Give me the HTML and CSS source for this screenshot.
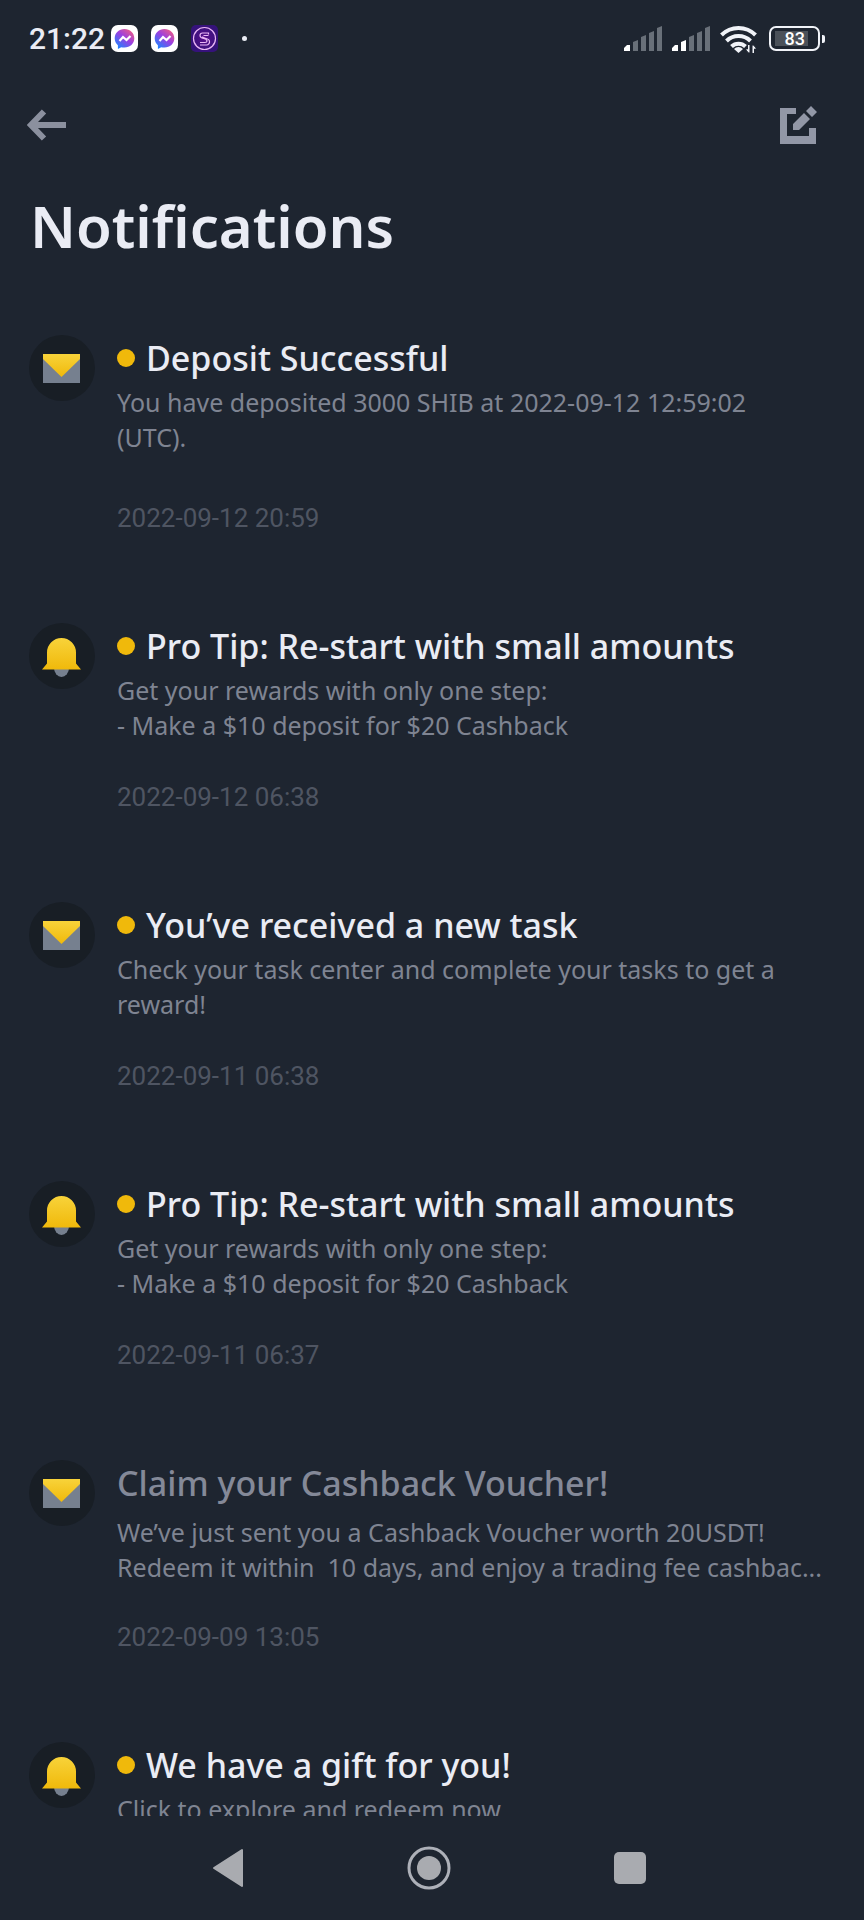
FILE: index.html
```html
<!DOCTYPE html>
<html lang="en">
<head>
    <meta charset="UTF-8">
    <meta name="viewport" content="width=device-width, initial-scale=1.0">
    <title>Notifications</title>
    <link rel="stylesheet" href="styles.css">
</head>
<body>
    <!-- Shared icons -->
    <svg class="sprite" aria-hidden="true">
        <defs>
            <linearGradient id="gold" x1="0" y1="0" x2="0" y2="1">
                <stop offset="0" stop-color="#f8d33a"/>
                <stop offset="1" stop-color="#f0b90b"/>
            </linearGradient>
            <linearGradient id="chat" x1="1" y1="0" x2="0.2" y2="1">
                <stop offset="0" stop-color="#ff6170"/>
                <stop offset="0.5" stop-color="#9b3fe0"/>
                <stop offset="1" stop-color="#1a86ff"/>
            </linearGradient>
            <radialGradient id="purple">
                <stop offset="0" stop-color="#5a0f8c"/>
                <stop offset="1" stop-color="#35127a"/>
            </radialGradient>
        </defs>
        <symbol id="icon-mail" viewBox="0 0 66 66">
            <path fill="#76808f" d="M14 19h37v29H14z"/>
            <path fill="url(#gold)" d="M14 19h37v5L32.5 42 14 24z"/>
        </symbol>
        <symbol id="icon-bell" viewBox="0 0 66 66">
            <path fill="#76808f" d="M25 45h15a7.5 9 0 0 1-15 0z"/>
            <path fill="url(#gold)" d="M18 29.500a14.500 14.500 0 0 1 29 0v11l5 6H13l5-6z"/>
        </symbol>
        <symbol id="icon-messenger" viewBox="0 0 27 27">
            <rect width="27" height="27" rx="7" fill="#fff"/>
            <path fill="url(#chat)" d="M13.5 4C8 4 3.700 8 3.700 13.300c0 2.900 1.200 5.300 3.200 7V24l3.300-1.800c1 .3 2.100.4 3.300.4 5.500 0 9.800-4 9.800-9.300S19 4 13.500 4z"/>
            <path fill="none" stroke="#fff" stroke-width="2.200" d="M8.500 16l3.500-4 3.500 3 4-4"/>
        </symbol>
    </svg>

    <!-- Status bar -->
    <div class="status-bar">
        <div class="status-left">
            <span class="clock">21:22</span>
            <svg class="app-icon" aria-hidden="true"><use href="#icon-messenger"/></svg>
            <svg class="app-icon" aria-hidden="true"><use href="#icon-messenger"/></svg>
            <svg class="app-icon" viewBox="0 0 27 27" aria-hidden="true">
                <rect width="27" height="27" rx="5" fill="url(#purple)"/>
                <circle cx="13.5" cy="13.5" r="11" fill="none" stroke="#e9b6f5" stroke-width="1.200"/>
                <path fill="none" stroke="#e9b6f5" stroke-width="1.200" d="M17.500 9.500v-1.500h-6a2.500 2.500 0 0 0-2.500 2.500c0 4 7 2 7 5.500 0 1-1 1.500-2 1.500H9M17.500 10.500h-5M9 20h6.500a3 3 0 0 0 3-3.500c0-4-7-2.500-7-5"/>
            </svg>
            <span class="more-dot"></span>
        </div>
        <div class="status-right">
            <svg class="signal" viewBox="0 0 39 25" aria-hidden="true">
                <path fill="#fff" d="M0 25v-3l3-3h3v6z"/>
                <path fill="#697079" d="M9 25v-9l5-2v11zM17 25V11l5-2v16zM25 25V7l5-2v20zM33 25V2l5-2v25z"/>
            </svg>
            <svg class="signal" viewBox="0 0 39 25" aria-hidden="true">
                <path fill="#fff" d="M0 25v-3l3-3h3v6zM9 25v-9l5-2v11z"/>
                <path fill="#697079" d="M17 25V11l5-2v16zM25 25V7l5-2v20zM33 25V2l5-2v25z"/>
            </svg>
            <svg class="wifi" viewBox="0 0 37 28" aria-hidden="true">
                <g fill="none" stroke="#f1f3f8" stroke-width="4">
                    <path d="M1.500 10a24 24 0 0 1 34 0"/>
                    <path d="M6.500 16a17 17 0 0 1 24 0"/>
                    <path d="M11.500 21.500a10 10 0 0 1 14 0"/>
                </g>
                <path fill="#f1f3f8" d="M14 24a6 6 0 0 1 9 0l-4.500 4z"/>
                <path fill="#f1f3f8" stroke="#1e2530" d="M30 19.500v8.500h-1.500l-3.500-4h2.500v-4.500zM32 28.500v-8.500h1.500l3.500 4h-2.500v4.500z"/>
            </svg>
            <div class="battery"><span class="battery-level">83</span></div>
        </div>
    </div>

    <header class="header">
        <button class="icon-btn" type="button" aria-label="Back">
            <svg width="40" height="32" viewBox="0 0 40 32">
                <path fill="none" stroke="#8b909e" stroke-width="6" d="M39 16H5M17 2.500L4 16l13 13.500"/>
            </svg>
        </button>
        <button class="icon-btn" type="button" aria-label="Mark all as read">
            <svg width="38" height="38" viewBox="0 0 38 38">
                <path fill="#9297a6" d="M0 2h16v6H7v22h22v-8h7v16H0zM13 18L24 7l6 6-11 11h-6zM26 5l5-5 6 6-5 5z"/>
            </svg>
        </button>
    </header>

    <h1 class="page-title">Notifications</h1>

    <main class="list">
        <article class="item item-spaced unread">
            <svg class="item-icon" aria-hidden="true"><use href="#icon-mail"/></svg>
            <div class="item-body">
                <h2 class="item-title">Deposit Successful</h2>
                <p class="item-text">You have deposited 3000 SHIB at 2022-09-12 12:59:02<br>(UTC).</p>
                <time class="item-date">2022-09-12 20:59</time>
            </div>
        </article>

        <article class="item unread">
            <svg class="item-icon" aria-hidden="true"><use href="#icon-bell"/></svg>
            <div class="item-body">
                <h2 class="item-title">Pro Tip: Re-start with small amounts</h2>
                <p class="item-text">Get your rewards with only one step:<br>- Make a $10 deposit for $20 Cashback</p>
                <time class="item-date">2022-09-12 06:38</time>
            </div>
        </article>

        <article class="item unread">
            <svg class="item-icon" aria-hidden="true"><use href="#icon-mail"/></svg>
            <div class="item-body">
                <h2 class="item-title">You’ve received a new task</h2>
                <p class="item-text">Check your task center and complete your tasks to get a<br>reward!</p>
                <time class="item-date">2022-09-11 06:38</time>
            </div>
        </article>

        <article class="item unread">
            <svg class="item-icon" aria-hidden="true"><use href="#icon-bell"/></svg>
            <div class="item-body">
                <h2 class="item-title">Pro Tip: Re-start with small amounts</h2>
                <p class="item-text">Get your rewards with only one step:<br>- Make a $10 deposit for $20 Cashback</p>
                <time class="item-date">2022-09-11 06:37</time>
            </div>
        </article>

        <article class="item read">
            <svg class="item-icon" aria-hidden="true"><use href="#icon-mail"/></svg>
            <div class="item-body">
                <h2 class="item-title">Claim your Cashback Voucher!</h2>
                <p class="item-text">We’ve just sent you a Cashback Voucher worth 20USDT!<br>Redeem it within&nbsp; 10 days, and enjoy a trading fee cashbac...</p>
                <time class="item-date">2022-09-09 13:05</time>
            </div>
        </article>

        <article class="item unread">
            <svg class="item-icon" aria-hidden="true"><use href="#icon-bell"/></svg>
            <div class="item-body">
                <h2 class="item-title">We have a gift for you!</h2>
                <p class="item-text">Click to explore and redeem now</p>
            </div>
        </article>
    </main>

    <!-- System navigation -->
    <nav class="nav-bar">
        <button class="nav-btn" type="button" aria-label="Back">
            <svg width="32" height="40" viewBox="0 0 32 40">
                <path fill="#a9abb0" stroke="#a9abb0" stroke-width="2" stroke-linejoin="round" d="M30 2v36L2 20z"/>
            </svg>
        </button>
        <button class="nav-btn" type="button" aria-label="Home">
            <svg width="44" height="44" viewBox="0 0 44 44">
                <circle cx="22" cy="22" r="20" fill="none" stroke="#adb0b8" stroke-width="3"/>
                <circle cx="22" cy="22" r="12" fill="#a9abb0"/>
            </svg>
        </button>
        <button class="nav-btn" type="button" aria-label="Recent apps">
            <svg width="32" height="32" viewBox="0 0 32 32">
                <rect width="32" height="32" rx="5" fill="#a9abb0"/>
            </svg>
        </button>
    </nav>
</body>
</html>
```

FILE: styles.css
```css
* {
    margin: 0;
    padding: 0;
    box-sizing: border-box;
}

body {
    background-color: #1e2530;
    color: #eaecf4;
    font-family: 'Noto Sans', sans-serif;
    display: flex;
    flex-direction: column;
    height: 100vh;
    overflow: hidden;
}

button {
    background: none;
    border: none;
    cursor: pointer;
}

svg {
    display: block;
}

.sprite {
    position: absolute;
    width: 0;
    height: 0;
}

/* Status bar */
.status-bar {
    display: flex;
    align-items: center;
    justify-content: space-between;
    height: 77px;
    padding: 0 40px 0 29px;
    font-family: Roboto, sans-serif;
}

.status-left,
.status-right {
    display: flex;
    align-items: center;
}

.status-left {
    gap: 13px;
}

.clock {
    font-size: 30px;
    font-weight: 500;
    margin-right: -7px;
}

.app-icon {
    width: 27px;
    height: 27px;
}

.more-dot {
    width: 5px;
    height: 5px;
    margin-left: 11px;
    border-radius: 50%;
    background-color: #eaecf4;
}

.status-right {
    gap: 9px;
}

.signal {
    width: 39px;
    height: 25px;
}

.wifi {
    width: 37px;
    height: 28px;
}

.battery {
    position: relative;
    width: 51px;
    height: 25px;
    margin: 0 4px 0 3px;
    padding: 3px 4px;
    border: 2px solid #f1f3f8;
    border-radius: 7px;
}

.battery::after {
    content: '';
    position: absolute;
    top: 7px;
    right: -7px;
    width: 3px;
    height: 8px;
    border-radius: 0 2px 2px 0;
    background-color: #f1f3f8;
}

.battery-level {
    display: block;
    width: 33px;
    background-color: #4b5159;
    color: #fff;
    font-size: 18px;
    font-weight: 500;
    line-height: 15px;
    text-align: right;
    padding-right: 3px;
}

/* Header */
.header {
    display: flex;
    align-items: center;
    justify-content: space-between;
    height: 95px;
    padding: 0 46px 0 27px;
}

.page-title {
    padding: 12px 30px 0;
    font-size: 58px;
    font-weight: 600;
    line-height: 84px;
}

/* Notification list */
.list {
    flex: 1;
    min-height: 0;
    overflow: hidden;
    padding: 67px 32px 0 29px;
}

.item {
    display: flex;
    gap: 22px;
    margin-bottom: 90px;
}

.item-icon {
    flex: none;
    width: 66px;
    height: 66px;
    border-radius: 50%;
    background-color: #181e25;
}

.item-body {
    flex: 1;
    min-width: 0;
}

.item-title {
    display: flex;
    align-items: center;
    font-size: 34px;
    font-weight: 500;
    line-height: 46px;
}

.unread .item-title::before {
    content: '';
    width: 18px;
    height: 18px;
    margin-right: 11px;
    border-radius: 50%;
    background-color: #f0b90b;
}

.item-text {
    margin-top: 4px;
    color: #7f8492;
    font-size: 25px;
    line-height: 35px;
    white-space: nowrap;
}

.item-date {
    display: block;
    margin-top: 39px;
    color: #4f5562;
    font-family: Roboto, sans-serif;
    font-size: 26px;
    line-height: 30px;
}

.item-spaced .item-date {
    margin-top: 48px;
}

.read .item-title {
    color: #848998;
}

.read .item-text {
    margin-top: 9px;
}

.read .item-date {
    margin-top: 37px;
}

/* System navigation */
.nav-bar {
    display: flex;
    align-items: center;
    justify-content: center;
    gap: 135px;
    height: 104px;
    padding-right: 6px;
}

.nav-btn {
    display: flex;
    align-items: center;
    justify-content: center;
    width: 66px;
    height: 66px;
}
```
